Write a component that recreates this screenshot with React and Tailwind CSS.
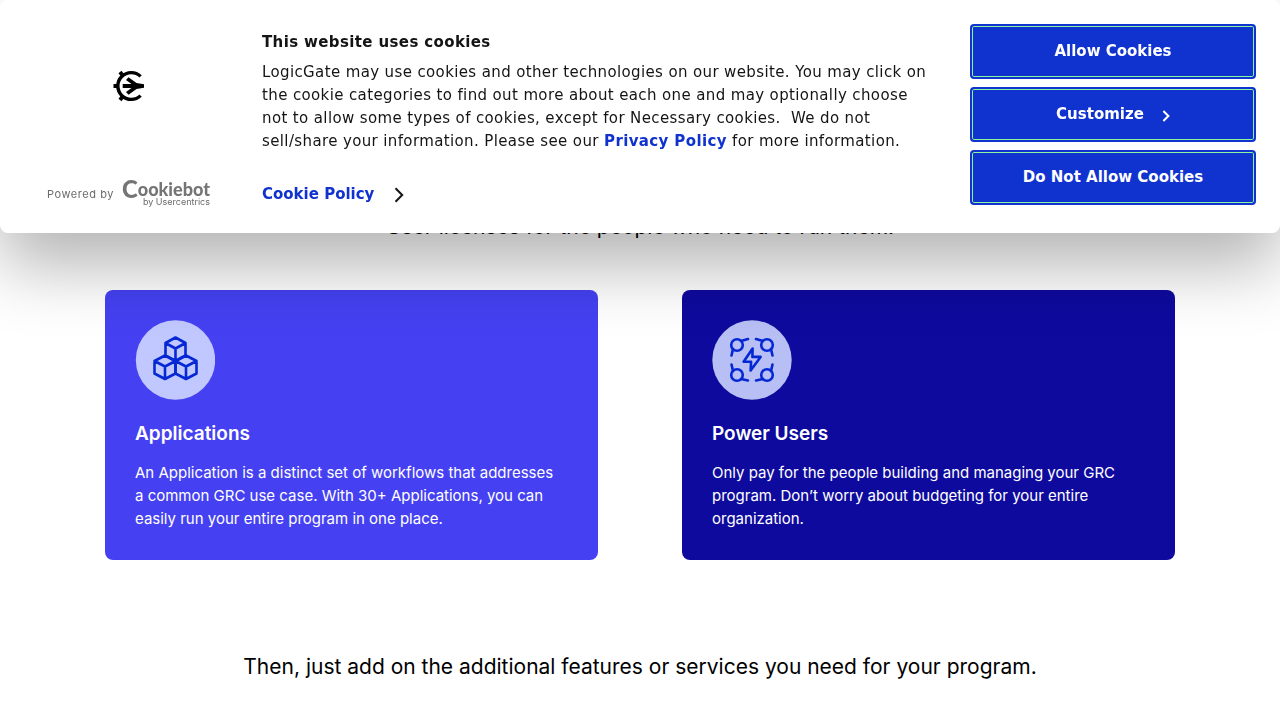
import React from "react";

function BrandMark() {
  return (
    <svg viewBox="0 0 32 32" className="size-8" fill="none" stroke="#000" strokeWidth="3.4" aria-label="LogicGate" role="img">
      <path d="M27.6 6.4A13.4 13.4 0 1 0 27.6 25.6" />
      <path d="M0.5 16H5M7 2l3 4M7 30l3 -4" strokeWidth="3.8" />
      <path
        d="M9.7 14.1H18.5L13 10 15.500 7.300 23.500 13 31 14.200V17.800L23.500 19 15.500 24.700 13 22 18.5 17.900H9.700z"
        fill="#000"
        stroke="none"
      />
    </svg>
  );
}

function Chevron({ className, weight = 2 }) {
  return (
    <svg viewBox="0 0 10 16" className={className} fill="none" stroke="currentColor" strokeWidth={weight} aria-hidden="true">
      <path d="M1.500 1.300 8.200 8 1.500 14.700" />
    </svg>
  );
}

function CookieButton({ children }) {
  return (
    <button
      type="button"
      className="flex h-[55px] w-full items-center justify-center rounded-sm border-2 border-[#1032cf] bg-[#1032cf] text-[15px] font-semibold text-white inset-ring inset-ring-[#8df5a0]"
    >
      {children}
    </button>
  );
}

function CookieDialog() {
  return (
    <div
      role="dialog"
      aria-label="This website uses cookies"
      className="fixed inset-x-0 top-0 z-10 flex rounded-lg bg-white pt-6 pr-6 pb-[27px] font-['DejaVu_Sans','Verdana',sans-serif] text-[15px] text-[#141414] shadow-[0_32px_68px_rgba(0,0,0,0.3)]"
    >
      <div className="flex w-[262px] shrink-0 flex-col justify-between pt-[46px] pl-[47px]">
        <div className="flex w-[163px] justify-center">
          <BrandMark />
        </div>
        <a href="#cookiebot" className="flex w-[163px] items-center justify-between font-['Inter',sans-serif] text-[#6b6b6b]">
          <span className="text-[11px] leading-4 tracking-wider">Powered by</span>
          <span className="flex flex-col items-end">
            <span className="flex items-center font-['Lato',sans-serif] font-black text-[#757575]">
              <span className="text-[24px] leading-4">C</span>
              <span className="text-[18px] leading-4">ookiebot</span>
            </span>
            <span className="text-[9px] leading-[9px]">by Usercentrics</span>
          </span>
        </a>
      </div>
      <div className="min-w-0 flex-1 pt-[7px] pr-8">
        <h2 className="leading-[23px] font-bold tracking-wide">This website uses cookies</h2>
        <p className="mt-[7px] leading-[23px] tracking-wide">
          LogicGate may use cookies and other technologies on our website. You may click on the cookie categories to
          find out more about each one and may optionally choose not to allow some types of cookies, except for
          Necessary cookies.&nbsp; We do not sell/share your information. Please see our{" "}
          <a href="#privacy" className="font-bold text-[#1032cf]">Privacy Policy</a> for more information.
        </p>
        <a href="#cookie-policy" className="mt-[30px] flex items-center gap-5 leading-[23px] font-bold text-[#1032cf]">
          Cookie Policy
          <Chevron className="h-4 w-[10px] text-[#141414]" />
        </a>
      </div>
      <div className="flex w-[286px] shrink-0 flex-col gap-2">
        <CookieButton>Allow Cookies</CookieButton>
        <CookieButton>
          Customize
          <Chevron className="mt-[2px] ml-[18px] h-3 w-2" weight={2.7} />
        </CookieButton>
        <CookieButton>Do Not Allow Cookies</CookieButton>
      </div>
    </div>
  );
}

function CubesIcon() {
  return (
    <svg viewBox="0 0 80 80" className="size-20" fill="none" stroke="#0527d4" strokeWidth="2.600" strokeLinejoin="round" strokeLinecap="round" aria-hidden="true">
      <circle cx="40.500" cy="40" r="39.700" fill="#c0c8ff" stroke="none" />
      <path d="M40.500 17.500l10 5.500v12.500l-10 5.500l-10-5.500V23zM30.500 23l10 5.500l10-5.500M40.500 28.500V41" />
      <path d="M30 35.500l10.500 5.500v12.500l-10.500 5.500l-10.500-5.500V41zM19.500 41l10.500 5.500l10.500-5.500M30 46.500V59" />
      <path d="M51 35.500l10.500 5.500v12.500l-10.500 5.500l-10.500-5.500V41zM40.500 41l10.500 5.500l10.500-5.500M51 46.500V59" />
    </svg>
  );
}

function PowerIcon() {
  return (
    <svg viewBox="0 0 80 80" className="size-20" fill="none" stroke="#0527d4" strokeWidth="2.600" strokeLinejoin="round" strokeLinecap="round" aria-hidden="true">
      <circle cx="40" cy="40" r="39.700" fill="#b7bff4" stroke="none" />
      <path d="M40.600 28.500l-9 13.200h7.500l-.5 8.800l10-13.600h-8.200z" />
      <circle cx="25" cy="25" r="5.800" />
      <circle cx="55" cy="25" r="5.800" />
      <circle cx="25" cy="55" r="5.800" />
      <circle cx="55" cy="55" r="5.800" />
      <path d="M29 21l7-2M21 29l-1.500 6.500M51 21l-7-2M59 29l1.500 6.500M21 51l-1.500-6.500M29 59l7 1.500M59 51l1.500-6.500M51 59l-7 1.500" />
    </svg>
  );
}

function Card({ icon, title, className, children }) {
  return (
    <article className={`rounded-lg p-[30px] text-white ${className}`}>
      {icon}
      <h3 className="mt-[19px] text-[19px] leading-[30px] font-semibold">{title}</h3>
      <p className="mt-3 pr-2 text-[15px] leading-[23px]">{children}</p>
    </article>
  );
}

export default function App() {
  return (
    <div className="min-h-screen bg-white font-['Inter',sans-serif] text-black">
      <CookieDialog />
      <main className="mx-auto max-w-[1070px] pt-[211px] pb-6">
        <p className="text-center text-[21px] leading-8">User licenses for the people who need to run them.</p>
        <div className="mt-[47px] grid grid-cols-2 gap-[84px]">
          <Card icon={<CubesIcon />} title="Applications" className="bg-[#4541f2]">
            An Application is a distinct set of workflows that addresses a common GRC use case. With 30+ Applications,
            you can easily run your entire program in one place.
          </Card>
          <Card icon={<PowerIcon />} title="Power Users" className="bg-[#0e0a9e]">
            Only pay for the people building and managing your GRC program. Don’t worry about budgeting for your entire
            organization.
          </Card>
        </div>
        <p className="mt-[91px] text-center text-[21px] leading-8">
          Then, just add on the additional features or services you need for your program.
        </p>
      </main>
    </div>
  );
}
